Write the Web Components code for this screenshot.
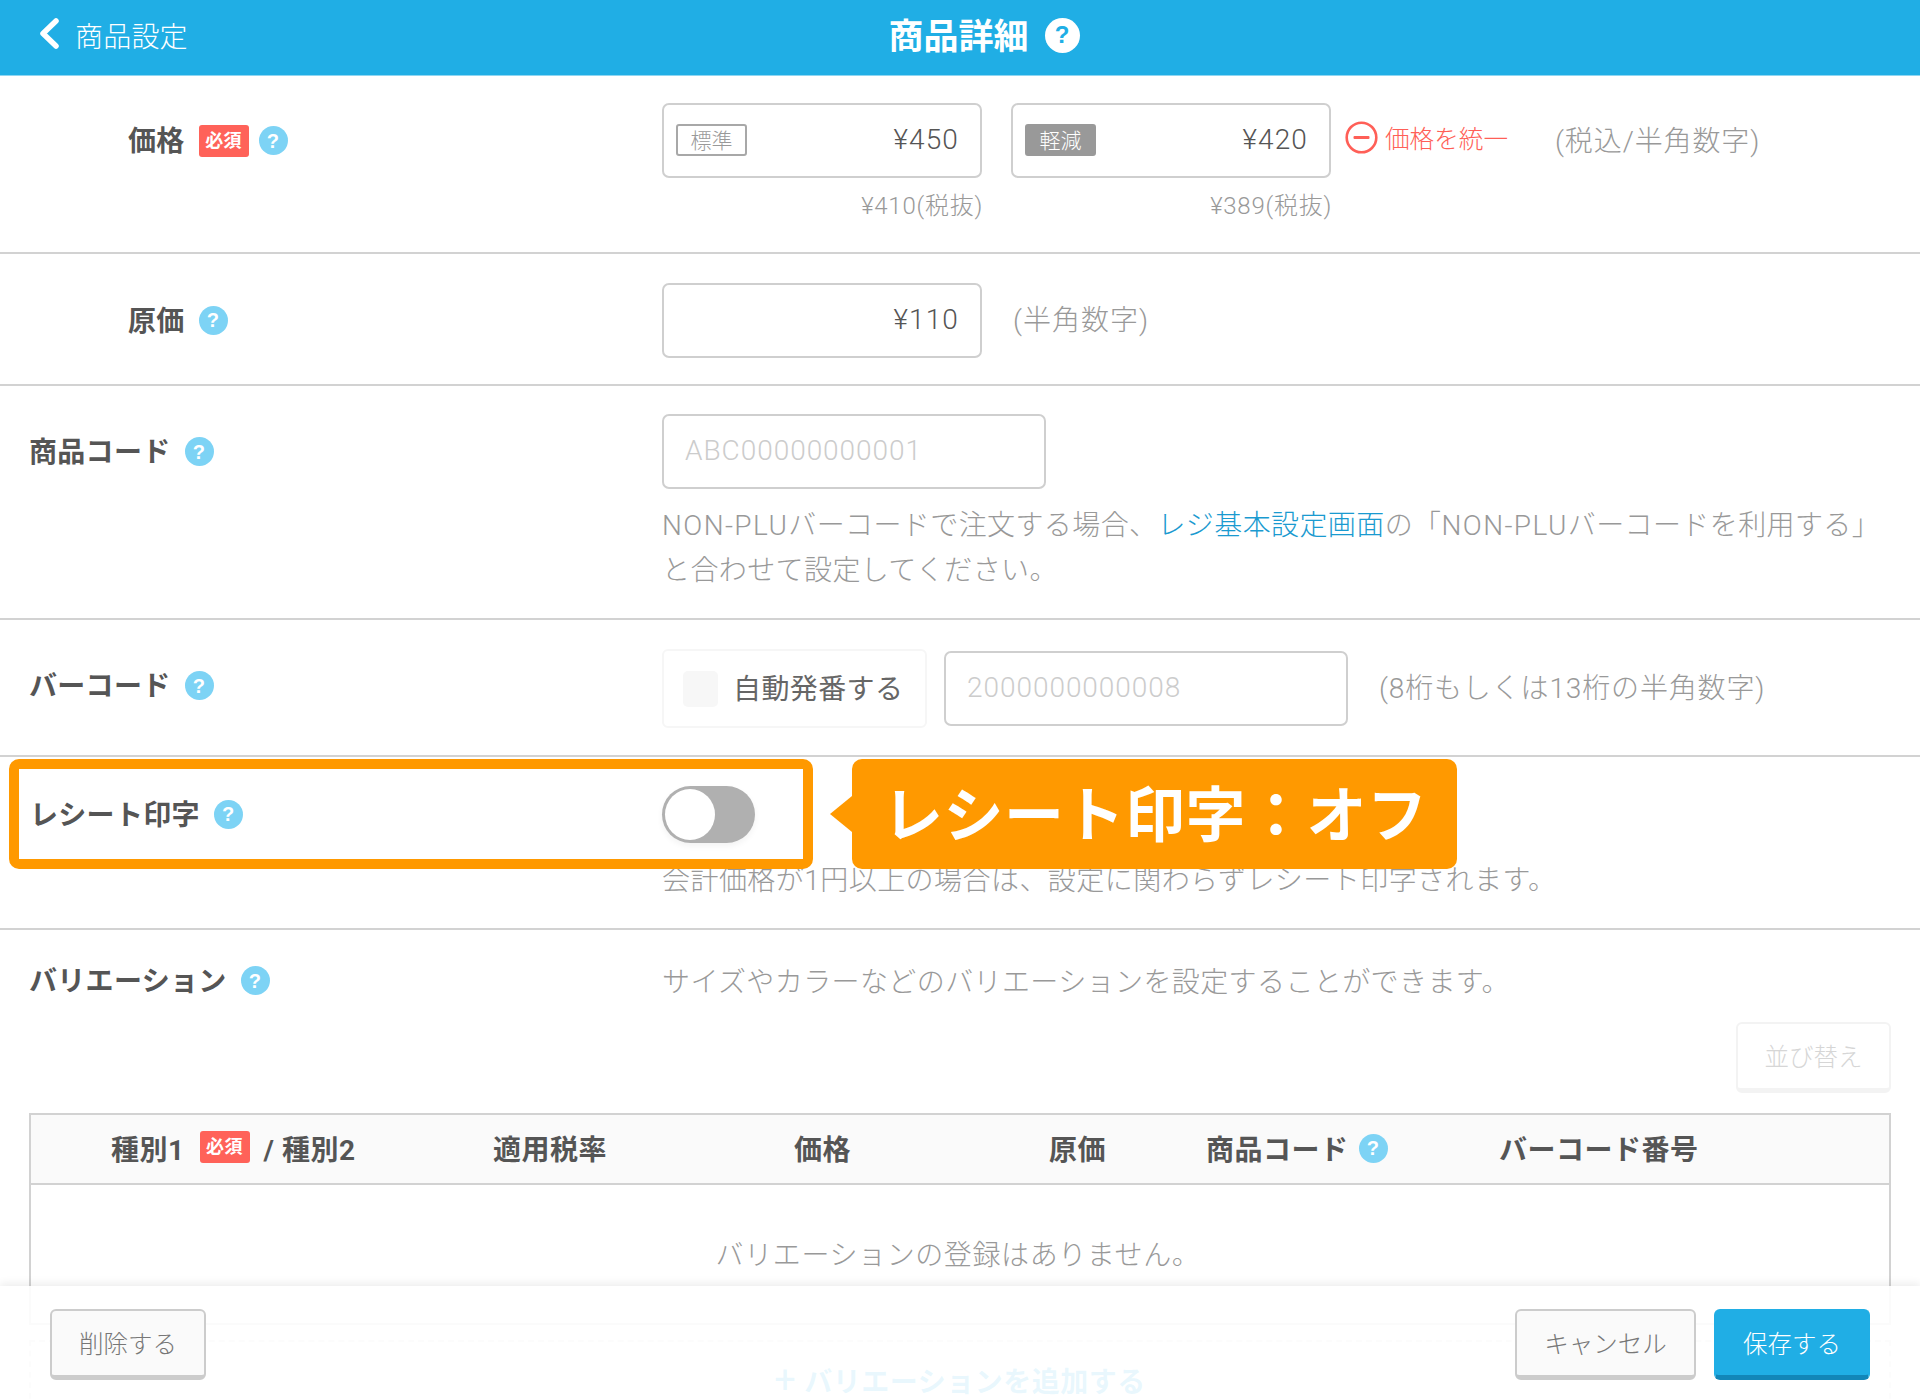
<!DOCTYPE html>
<html lang="ja">
<head>
<meta charset="utf-8">
<title>商品詳細</title>
<style>
html,body{margin:0;padding:0;background:#fff;}
body{width:1920px;height:1400px;overflow:hidden;position:relative;font-family:Roboto,"Noto Sans CJK JP",sans-serif;font-weight:300;font-size:28px;color:#999;}
.lat{letter-spacing:1.4px;}
</style>
</head>
<body>
<app-header>商品設定<span slot="title">商品詳細</span></app-header>

<form-row style="--pt:27px;--h:178px;--lp:128px;--lh:75px">
  <span slot="label">価格</span><req-badge slot="label"></req-badge><help-icon slot="label" style="margin-left:-4px"></help-icon>
  <flex-line style="--gap:0;--align:flex-start">
    <price-cell note="¥410(税抜)" style="margin-right:29px"><text-input style="--w:320px"><tag-label slot="tag">標準</tag-label>¥450</text-input></price-cell>
    <price-cell note="¥389(税抜)" style="margin-right:14px"><text-input style="--w:320px"><tag-label slot="tag" filled>軽減</tag-label>¥420</text-input></price-cell>
    <unify-link style="margin-right:47px">価格を統一</unify-link>
    <hint-text style="--lh:78px;--ls:.9px">(税込/半角数字)</hint-text>
  </flex-line>
</form-row>

<form-row style="--pt:29px;--h:132px;--lp:128px;--lh:74px">
  <span slot="label">原価</span><help-icon slot="label"></help-icon>
  <flex-line style="--gap:31px">
    <text-input style="--w:320px">¥110</text-input>
    <hint-text style="--lh:75px;--ls:1px">(半角数字)</hint-text>
  </flex-line>
</form-row>

<form-row style="--pt:28px;--h:234px;--lp:29px;--lh:75px">
  <span slot="label">商品コード</span><help-icon slot="label"></help-icon>
  <text-input style="--w:384px" placeholder="ABC00000000001"></text-input>
  <hint-text style="--lh:45px;--ls:.4px;margin-top:14px;margin-right:-10px"><span class="lat">NON-PLU</span>バーコードで注文する場合、<a-link>レジ基本設定画面</a-link>の「<span class="lat">NON-PLU</span>バーコードを利用する」<br>と合わせて設定してください。</hint-text>
</form-row>

<form-row style="--pt:29px;--h:137px;--lp:29px;--lh:73px">
  <span slot="label">バーコード</span><help-icon slot="label"></help-icon>
  <flex-line style="--gap:0">
    <check-box style="margin-right:17px">自動発番する</check-box>
    <text-input style="--w:404px;margin-right:31px" placeholder="2000000000008"></text-input>
    <hint-text style="--lh:77px;--ls:.85px">(8桁もしくは13桁の半角数字)</hint-text>
  </flex-line>
</form-row>

<form-row style="--pt:29px;--h:173px;--lp:30px;--lh:56px">
  <span slot="label">レシート印字</span><help-icon slot="label"></help-icon>
  <toggle-switch></toggle-switch>
  <hint-text style="--lh:40px;--ls:.45px;margin-top:18px">会計価格が1円以上の場合は、設定に関わらずレシート印字されます。</hint-text>
  <note-callout slot="overlay">レシート印字：オフ</note-callout>
</form-row>

<form-row style="--pt:16px;--h:183px;--lp:29px;--lh:69px;--border:0">
  <span slot="label">バリエーション</span><help-icon slot="label"></help-icon>
  <hint-text style="--lh:74px;--ls:.4px">サイズやカラーなどのバリエーションを設定することができます。</hint-text>
  <flex-line style="--justify:flex-end;margin-top:2px"><push-button disabled style="--w:155px">並び替え</push-button></flex-line>
</form-row>

<variation-table></variation-table>

<footer-bar>
  <push-button style="--w:156px">削除する</push-button>
  <push-button slot="right" style="--w:181px">キャンセル</push-button>
  <push-button slot="right" primary style="--w:156px">保存する</push-button>
</footer-bar>

<script>
const FONT = 'Roboto,"Noto Sans CJK JP",sans-serif';
function def(name, html, init){
  customElements.define(name, class extends HTMLElement{
    constructor(){
      super();
      this.attachShadow({mode:'open'}).innerHTML = html;
    }
    connectedCallback(){ if(init) init(this, this.shadowRoot); }
  });
}

def('help-icon', `<style>
:host{display:inline-flex;width:var(--s,29px);height:var(--s,29px);border-radius:50%;background:var(--bg,#7dd3f5);color:var(--fg,#fff);align-items:center;justify-content:center;font:700 var(--fs,20px)/1 "Liberation Sans",sans-serif;flex:none;}
</style>?`);

def('req-badge', `<style>
:host{display:inline-flex;width:50px;height:32px;border-radius:3px;background:#ff6259;color:#fff;align-items:center;justify-content:center;font:700 18px/1 ${FONT};flex:none;}
</style>必須`);

def('app-header', `<style>
:host{display:grid;grid-template-columns:1fr auto 1fr;align-items:center;height:75px;background:#20aee5;border-bottom:1px solid #8ed6f2;color:#fff;font-family:${FONT};}
.back{display:flex;align-items:center;padding:0 0 6px 38px;font-size:28px;font-weight:300;letter-spacing:.2px;}
.back svg{width:24px;height:32px;margin:-1px 13px 0 0;}
.title{display:flex;align-items:center;font-size:35px;font-weight:700;grid-column:2;padding:0 0 5px 48px;}
::slotted(span){margin-bottom:4px;}
help-icon{--s:35px;--bg:#fff;--fg:#20aee5;--fs:24px;margin-left:16px;}
</style>
<div class="back"><svg viewBox="0 0 24 32"><path d="M18 3 L5 15.5 L18 28" fill="none" stroke="#fff" stroke-width="5.5" stroke-linecap="round" stroke-linejoin="round"/></svg><slot></slot></div>
<div class="title"><slot name="title"></slot><help-icon></help-icon></div><div></div>`);

def('form-row', `<style>
:host{display:block;box-sizing:border-box;height:var(--h);border-bottom:var(--border,2px solid #d2d2d2);position:relative;}
.grid{display:grid;grid-template-columns:662px 1fr;padding-top:var(--pt);padding-right:29px;}
.label{box-sizing:border-box;height:var(--lh);padding-left:var(--lp);display:flex;align-items:center;gap:14px;font-weight:700;color:#555;font-size:28px;white-space:nowrap;letter-spacing:.3px;}
::slotted(span){margin-bottom:3px;}
.content{min-width:0;}
</style>
<div class="grid"><div class="label"><slot name="label"></slot></div><div class="content"><slot></slot></div></div>
<slot name="overlay"></slot>`);

def('flex-line', `<style>
:host{display:flex;align-items:var(--align,center);gap:var(--gap,0);justify-content:var(--justify,flex-start);}
</style><slot></slot>`);

def('text-input', `<style>
:host{display:flex;align-items:center;box-sizing:border-box;width:var(--w);height:75px;border:2px solid #cfcfcf;border-radius:7px;padding:0 21px 2px 12px;background:#fff;flex:none;}
.val{flex:1;text-align:right;color:#555;letter-spacing:1.1px;}
.ph{color:#ccc;padding-left:9px;letter-spacing:.95px;}
</style><slot name="tag"></slot><span class="ph"></span><span class="val"><slot></slot></span>`,
(el,root)=>{ const p=el.getAttribute('placeholder'); if(p){ root.querySelector('.ph').textContent=p; } else { root.querySelector('.ph').remove(); } });

def('tag-label', `<style>
:host{display:inline-flex;box-sizing:border-box;width:71px;height:32px;padding-bottom:2px;border:2px solid #a8a8a8;border-radius:3px;color:#999;align-items:center;justify-content:center;font-size:21px;font-weight:300;flex:none;}
:host([filled]){background:#999;color:#fff;border-color:#999;}
</style><slot></slot>`);

def('price-cell', `<style>
:host{display:flex;flex-direction:column;align-items:flex-end;flex:none;}
.note{margin:11px -1px 0 0;font-size:24px;line-height:34px;color:#999;letter-spacing:.75px;}
</style><slot></slot><div class="note"></div>`,
(el,root)=>{ root.querySelector('.note').textContent=el.getAttribute('note'); });

def('unify-link', `<style>
:host{display:flex;align-items:center;height:68px;color:#ff5f57;font-size:24.6px;flex:none;}
svg{width:33px;height:33px;margin-right:7px;}
</style><svg viewBox="0 0 33 33"><circle cx="16.5" cy="16.5" r="14.8" fill="none" stroke="#ff5f57" stroke-width="2.6"/><rect x="8.5" y="15" width="16" height="3" rx="1" fill="#ff5f57"/></svg><slot></slot>`);

def('hint-text', `<style>
:host{display:block;color:#999;line-height:var(--lh,40px);font-size:28px;white-space:nowrap;letter-spacing:var(--ls,0);}
</style><slot></slot>`);

def('a-link', `<style>:host{color:#1a9ad0;}</style><slot></slot>`);

def('check-box', `<style>
:host{display:flex;align-items:center;box-sizing:border-box;width:265px;height:79px;border:2px solid #f6f6f6;border-radius:6px;padding:0 0 3px 19px;color:#666;font-weight:400;letter-spacing:.4px;flex:none;}
i{display:block;width:35px;height:36px;border-radius:5px;background:#f7f7f7;margin:3px 15px 0 0;}
</style><i></i><slot></slot>`);

def('toggle-switch', `<style>
:host{display:block;box-sizing:border-box;width:93px;height:57px;border-radius:29px;background:#b0b0b0;padding:3px;box-shadow:0 3px 6px rgba(0,0,0,.05);}
i{display:block;width:50px;height:51px;border-radius:50%;background:#fff;}
</style><i></i>`);

def('note-callout', `<style>
:host{display:block;position:absolute;left:0;top:2px;width:100%;height:110px;pointer-events:none;}
.box{position:absolute;left:9px;top:0;width:804px;height:110px;box-sizing:border-box;border:10px solid #ff9900;border-radius:10px;}
.tip{position:absolute;left:830px;top:37px;width:0;height:0;border:18px solid transparent;border-left:0;border-right:22px solid #ff9900;}
.msg{position:absolute;left:852px;top:0;width:605px;height:110px;box-sizing:border-box;padding-left:31px;background:#ff9900;border-radius:10px;color:#fff;font:700 60px/116px ${FONT};letter-spacing:.5px;white-space:nowrap;}
</style><div class="box"></div><div class="tip"></div><div class="msg"><slot></slot></div>`);

def('push-button', `<style>
:host{display:flex;box-sizing:border-box;width:var(--w);height:71px;padding-bottom:2px;align-items:center;justify-content:center;border:2px solid #ccc;border-bottom-width:5px;border-radius:6px;background:#fafafa;color:#777;font-size:24.5px;font-weight:300;flex:none;}
:host([primary]){background:#20aee5;border-color:#20aee5;border-bottom-color:#1286b8;color:#fff;}
:host([disabled]){border-color:#f3f3f3;background:#fff;color:#d6d6d6;}
</style><slot></slot>`);

def('table-head', `<style>
:host{display:grid;grid-template-columns:382px 301px 255px 157px 293px 1fr;box-sizing:border-box;height:70px;padding:0 0 2px 80px;background:#fafafa;border-bottom:2px solid #d2d2d2;align-items:center;font-weight:700;color:#555;font-size:28px;letter-spacing:.5px;}
div{display:flex;align-items:center;white-space:nowrap;}
req-badge{margin:-2px 14px 0 15px;}
help-icon{margin-left:10px;}
</style>
<div>種別1<req-badge></req-badge>/ 種別2</div><div>適用税率</div><div>価格</div><div>原価</div><div>商品コード<help-icon></help-icon></div><div>バーコード番号</div>`);

def('variation-table', `<style>
:host{display:block;margin:0 29px;}
.tbl{border:2px solid #d2d2d2;box-sizing:border-box;height:212px;}
.empty{height:138px;display:flex;align-items:center;justify-content:center;color:#999;padding:0 4px 2px 0;letter-spacing:.6px;box-sizing:border-box;}
.add{height:80px;border:2px dashed #ddd;border-bottom:0;margin-top:15px;display:flex;align-items:center;justify-content:center;color:#20aee5;font-weight:700;font-size:28px;letter-spacing:.5px;box-sizing:border-box;padding-bottom:2px;}
.add span{font-size:38px;margin-right:8px;font-weight:400;}
</style>
<div class="tbl"><table-head></table-head><div class="empty">バリエーションの登録はありません。</div></div>
<div class="add"><span>+</span>バリエーションを追加する</div>`);

def('footer-bar', `<style>
:host{position:absolute;left:0;right:0;bottom:0;height:114px;box-sizing:border-box;background:rgba(255,255,255,.9);box-shadow:0 -3px 8px rgba(0,0,0,.07);display:flex;justify-content:space-between;padding:23px 50px 0;align-items:flex-start;}
.r{display:flex;gap:18px;}
</style><slot></slot><div class="r"><slot name="right"></slot></div>`);
</script>
</body>
</html>
